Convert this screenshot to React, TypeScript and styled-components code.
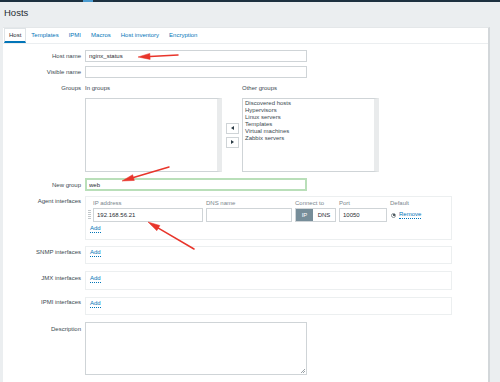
import React from 'react';
import styled, { createGlobalStyle } from 'styled-components';

const GlobalStyle = createGlobalStyle`
  html, body {
    margin: 0;
    padding: 0;
  }
  body {
    width: 500px;
    height: 382px;
    overflow: hidden;
    background: #ebeef0;
    font-family: "Liberation Sans", Arial, sans-serif;
    color: #1f2c33;
  }
`;

const Page = styled.div`
  position: relative;
  width: 500px;
  height: 382px;
  overflow: hidden;
  display: flex;
  flex-direction: column;
`;

const TopBar = styled.div`
  height: 2px;
  flex-shrink: 0;
  display: flex;
  background: #1d3140;
`;

const TopBarMark = styled.div`
  margin-left: 83px;
  width: 10px;
  background: #4a9bd0;
`;

const Title = styled.h1`
  margin: 0;
  height: 25px;
  flex-shrink: 0;
  padding-left: 4px;
  font-size: 9.5px;
  font-weight: normal;
  line-height: 22px;
  color: #1f2c33;
`;

const Panel = styled.div`
  flex: 1;
  margin-left: 3px;
  width: 485px;
  background: #fff;
  border-top: 1px solid #e4e7e9;
  border-right: 2px solid #d3d7da;
`;

const TabBar = styled.div`
  display: flex;
  height: 15px;
  padding-left: 1px;
  border-bottom: 1px solid #ebeef0;
`;

const Tab = styled.div<{ $active?: boolean }>`
  box-sizing: border-box;
  height: 15px;
  padding: 0 4px;
  font-size: 6px;
  line-height: 12px;
  color: ${p => (p.$active ? '#1f2c33' : '#0275b8')};
  border: 1px solid ${p => (p.$active ? '#dfe4e7' : 'transparent')};
  border-bottom: 2px solid ${p => (p.$active ? '#0275b8' : 'transparent')};
`;

const Form = styled.div`
  display: flex;
  flex-direction: column;
  padding-top: 6px;
`;

const Row = styled.div<{ $top?: number }>`
  display: grid;
  grid-template-columns: 78px 1fr;
  column-gap: 4px;
  margin-top: ${p => p.$top ?? 0}px;
`;

const Label = styled.div<{ $pad?: number }>`
  text-align: right;
  font-size: 6px;
  line-height: 8px;
  padding-top: ${p => p.$pad ?? 2}px;
  color: #3a4950;
  white-space: nowrap;
`;

const TextInput = styled.input<{ $w: number; $h?: number; $focus?: boolean }>`
  box-sizing: border-box;
  width: ${p => p.$w}px;
  height: ${p => p.$h ?? 12}px;
  margin: 0;
  padding: 0 ${p => (p.$focus ? 2 : 3)}px;
  border: ${p => (p.$focus ? '2px solid #b9dfb9' : '1px solid #cfd4d7')};
  border-radius: 0;
  outline: none;
  background: #fff;
  font-family: "Liberation Sans", Arial, sans-serif;
  font-size: 6px;
  color: #1f2c33;
`;

const GroupsGrid = styled.div`
  display: grid;
  grid-template-columns: 137px 14px 137px;
  grid-template-rows: 8px 74px;
  column-gap: 3px;
  row-gap: 6px;
`;

const ColumnHead = styled.div`
  font-size: 6px;
  line-height: 8px;
  color: #3a4950;
  white-space: nowrap;
`;

const ListBox = styled.div`
  box-sizing: border-box;
  border: 1px solid #cfd4d7;
  border-right: 5px solid #e9ebec;
  padding: 1px 2px;
  font-size: 6px;
  line-height: 7px;
  color: #3a4950;
`;

const ShiftColumn = styled.div`
  display: flex;
  flex-direction: column;
  align-items: flex-end;
  align-self: center;
  gap: 3px;
`;

const ShiftButton = styled.div`
  box-sizing: border-box;
  width: 13px;
  height: 11px;
  border: 1px solid #cfd4d7;
  background: #fff;
  display: flex;
  align-items: center;
  justify-content: center;
`;

const InterfaceBox = styled.div<{ $h?: number }>`
  box-sizing: border-box;
  width: 367px;
  height: ${p => (p.$h ? `${p.$h}px` : 'auto')};
  border: 1px solid #eceff0;
  padding: 2px 2px 6px 2px;
  display: flex;
  flex-direction: column;
  justify-content: ${p => (p.$h ? 'center' : 'flex-start')};
`;

const InterfaceGrid = styled.div`
  display: grid;
  grid-template-columns: 2px 110px 86px 41px 48px auto;
  grid-template-rows: 8px 14px;
  column-gap: 3px;
  row-gap: 1px;
  align-items: center;
`;

const HeadCell = styled.div`
  font-size: 6px;
  line-height: 8px;
  color: #7a868d;
  white-space: nowrap;
`;

const DragHandle = styled.div`
  width: 3px;
  height: 10px;
  background: repeating-linear-gradient(to bottom, #c2c7ca 0 1px, transparent 1px 2px);
`;

const Toggle = styled.div`
  box-sizing: border-box;
  display: flex;
  height: 14px;
  border: 1px solid #cfd4d7;
`;

const ToggleOption = styled.div<{ $on?: boolean; $w: number }>`
  width: ${p => p.$w}px;
  display: flex;
  align-items: center;
  justify-content: center;
  background: ${p => (p.$on ? '#768d99' : '#fff')};
  color: ${p => (p.$on ? '#fff' : '#1f2c33')};
  font-size: 6px;
`;

const DefaultCell = styled.div`
  display: flex;
  align-items: center;
  gap: 3px;
  padding-left: 1px;
`;

const Radio = styled.span`
  box-sizing: border-box;
  width: 5px;
  height: 5px;
  border-radius: 50%;
  border: 1px solid #8a9399;
  display: flex;
  align-items: center;
  justify-content: center;
  &::after {
    content: '';
    width: 2px;
    height: 2px;
    border-radius: 50%;
    background: #1f2c33;
  }
`;

const Link = styled.span<{ $indent?: number; $top?: number }>`
  align-self: flex-start;
  margin-left: ${p => p.$indent ?? 0}px;
  margin-top: ${p => p.$top ?? 0}px;
  font-size: 6px;
  line-height: 7px;
  color: #0275b8;
  border-bottom: 1px dotted #0275b8;
`;

const DescriptionBox = styled.div`
  position: relative;
  box-sizing: border-box;
  width: 222px;
  height: 53px;
  border: 1px solid #cfd4d7;
  background: #fff;
  &::after {
    content: '';
    position: absolute;
    right: 1px;
    bottom: 1px;
    width: 4px;
    height: 4px;
    background: linear-gradient(135deg, transparent 45%, #9aa2a7 45% 55%, transparent 55% 70%, #9aa2a7 70% 80%, transparent 80%);
  }
`;

const Overlay = styled.svg`
  position: absolute;
  left: 0;
  top: 0;
  pointer-events: none;
`;

const otherGroups = [
  'Discovered hosts',
  'Hypervisors',
  'Linux servers',
  'Templates',
  'Virtual machines',
  'Zabbix servers',
];

const tabs = ['Host', 'Templates', 'IPMI', 'Macros', 'Host inventory', 'Encryption'];

const interfaceHeads = ['IP address', 'DNS name', 'Connect to', 'Port', 'Default'];

// annotation arrows drawn over the screenshot: [tailX, tailY, tipX, tipY]
const arrows: [number, number, number, number][] = [
  [178, 55, 138, 57],
  [169, 167, 122, 181],
  [194, 249, 148, 222],
];

function Arrow({ a }: { a: [number, number, number, number] }) {
  const [x1, y1, x2, y2] = a;
  const len = Math.hypot(x2 - x1, y2 - y1);
  const dx = (x2 - x1) / len;
  const dy = (y2 - y1) / len;
  const bx = x2 - dx * 12;
  const by = y2 - dy * 12;
  const px = -dy * 3;
  const py = dx * 3;
  return (
    <g fill="#e8352b" stroke="#e8352b">
      <line x1={x1} y1={y1} x2={bx} y2={by} strokeWidth={1.5} strokeLinecap="round" />
      <polygon points={`${x2},${y2} ${bx + px},${by + py} ${bx - px},${by - py}`} strokeWidth={0.5} />
    </g>
  );
}

function Triangle({ left }: { left?: boolean }) {
  return (
    <svg width="3" height="4" viewBox="0 0 3 4">
      <polygon points={left ? '3,0 3,4 0,2' : '0,0 0,4 3,2'} fill="#2b3b45" />
    </svg>
  );
}

function EmptyInterface({ h }: { h: number }) {
  return (
    <InterfaceBox $h={h}>
      <Link $indent={2}>Add</Link>
    </InterfaceBox>
  );
}

export default function App() {
  return (
    <Page>
      <GlobalStyle />
      <TopBar>
        <TopBarMark />
      </TopBar>
      <Title>Hosts</Title>
      <Panel>
        <TabBar>
          {tabs.map((t, i) => (
            <Tab key={t} $active={i === 0}>{t}</Tab>
          ))}
        </TabBar>
        <Form>
          <Row>
            <Label>Host name</Label>
            <TextInput $w={222} readOnly defaultValue="nginx_status" />
          </Row>
          <Row $top={4}>
            <Label>Visible name</Label>
            <TextInput $w={222} readOnly defaultValue="" />
          </Row>
          <Row $top={6}>
            <Label $pad={0}>Groups</Label>
            <GroupsGrid>
              <ColumnHead>In groups</ColumnHead>
              <div />
              <ColumnHead>Other groups</ColumnHead>
              <ListBox />
              <ShiftColumn>
                <ShiftButton><Triangle left /></ShiftButton>
                <ShiftButton><Triangle /></ShiftButton>
              </ShiftColumn>
              <ListBox>
                {otherGroups.map(g => (
                  <div key={g}>{g}</div>
                ))}
              </ListBox>
            </GroupsGrid>
          </Row>
          <Row $top={6}>
            <Label $pad={3}>New group</Label>
            <TextInput $w={222} $h={13} $focus readOnly defaultValue="web" />
          </Row>
          <Row $top={5}>
            <Label $pad={1}>Agent interfaces</Label>
            <InterfaceBox>
              <InterfaceGrid>
                <span />
                {interfaceHeads.map(h => (
                  <HeadCell key={h}>{h}</HeadCell>
                ))}
                <DragHandle />
                <TextInput $w={110} $h={14} readOnly defaultValue="192.168.56.21" />
                <TextInput $w={86} $h={14} readOnly defaultValue="" />
                <Toggle>
                  <ToggleOption $on $w={17}>IP</ToggleOption>
                  <ToggleOption $w={22}>DNS</ToggleOption>
                </Toggle>
                <TextInput $w={48} $h={14} readOnly defaultValue="10050" />
                <DefaultCell>
                  <Radio />
                  <Link>Remove</Link>
                </DefaultCell>
              </InterfaceGrid>
              <Link $indent={2} $top={3}>Add</Link>
            </InterfaceBox>
          </Row>
          <Row $top={6}>
            <Label $pad={2}>SNMP interfaces</Label>
            <EmptyInterface h={18} />
          </Row>
          <Row $top={7}>
            <Label $pad={3}>JMX interfaces</Label>
            <EmptyInterface h={19} />
          </Row>
          <Row $top={7}>
            <Label $pad={1}>IPMI interfaces</Label>
            <EmptyInterface h={18} />
          </Row>
          <Row $top={7}>
            <Label $pad={3}>Description</Label>
            <DescriptionBox />
          </Row>
        </Form>
      </Panel>
      <Overlay width="500" height="382" viewBox="0 0 500 382">
        {arrows.map((a, i) => (
          <Arrow key={i} a={a} />
        ))}
      </Overlay>
    </Page>
  );
}
